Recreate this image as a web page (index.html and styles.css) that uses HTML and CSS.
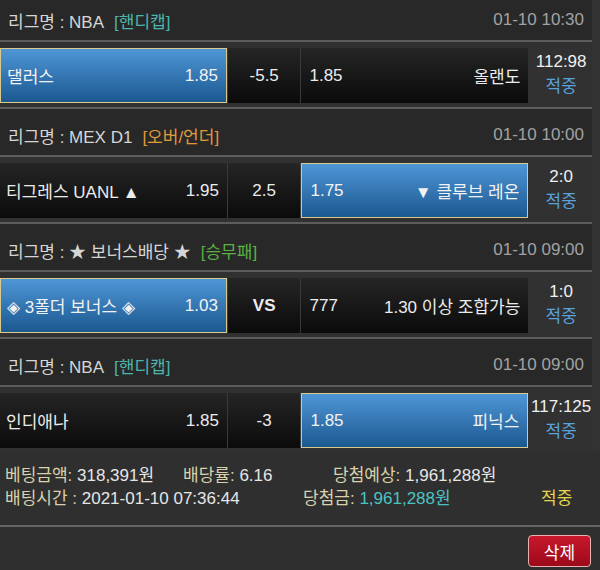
FILE: index.html
```html
<!DOCTYPE html>
<html>
<head>
    <title>Bet Slip</title>
    <link rel="stylesheet" href="styles.css">
  </head>

  <body>
    <div class="board">

      <div class="game">
        <div class="league">
          <span class="league-name">리그명 : NBA</span>
          <span class="market handi">[핸디캡]</span>
          <span class="time">01-10 10:30</span>
        </div>
        <div class="row">
          <div class="cell team pick"><span>댈러스</span><span>1.85</span></div>
          <div class="cell line">-5.5</div>
          <div class="cell team"><span>1.85</span><span>올랜도</span></div>
          <div class="result"><div class="score">112:98</div><div class="hit">적중</div></div>
        </div>
      </div>

      <div class="game">
        <div class="league">
          <span class="league-name">리그명 : MEX D1</span>
          <span class="market overunder">[오버/언더]</span>
          <span class="time">01-10 10:00</span>
        </div>
        <div class="row">
          <div class="cell team"><span>티그레스 UANL ▲</span><span>1.95</span></div>
          <div class="cell line">2.5</div>
          <div class="cell team pick"><span>1.75</span><span>▼ 클루브 레온</span></div>
          <div class="result"><div class="score">2:0</div><div class="hit">적중</div></div>
        </div>
      </div>

      <div class="game">
        <div class="league">
          <span class="league-name">리그명 : ★ 보너스배당 ★</span>
          <span class="market winlose">[승무패]</span>
          <span class="time">01-10 09:00</span>
        </div>
        <div class="row">
          <div class="cell team pick"><span>◈ 3폴더 보너스 ◈</span><span>1.03</span></div>
          <div class="cell line vs">VS</div>
          <div class="cell team"><span>777</span><span>1.30 이상 조합가능</span></div>
          <div class="result"><div class="score">1:0</div><div class="hit">적중</div></div>
        </div>
      </div>

      <div class="game last">
        <div class="league">
          <span class="league-name">리그명 : NBA</span>
          <span class="market handi">[핸디캡]</span>
          <span class="time">01-10 09:00</span>
        </div>
        <div class="row">
          <div class="cell team"><span>인디애나</span><span>1.85</span></div>
          <div class="cell line">-3</div>
          <div class="cell team pick"><span>1.85</span><span>피닉스</span></div>
          <div class="result"><div class="score">117:125</div><div class="hit">적중</div></div>
        </div>
      </div>

    </div>

    <div class="summary">
      <div class="summary-row">
        <span class="amount"><b>베팅금액:</b> 318,391원</span>
        <span class="rate"><b>배당률:</b> 6.16</span>
        <span class="expect"><b>당첨예상:</b> 1,961,288원</span>
      </div>
      <div class="summary-row">
        <span class="bet-time"><b>배팅시간 :</b> 2021-01-10 07:36:44</span>
        <span class="won"><b>당첨금:</b> <em>1,961,288원</em></span>
        <span class="status">적중</span>
      </div>
    </div>

    <div class="actions">
      <button class="delete-button">삭제</button>
    </div>
  </body>
</html>
```

FILE: styles.css
```css
 body {
   background-color: #323232;
   font-family: "Liberation Sans", Arial, "Noto Sans CJK KR", sans-serif;
   font-size: 17px;
   color: #e6e6e6;
   margin: 0;
   padding: 0;
 }

 .board {
   width: 592px;
 }

 .league {
   display: flex;
   align-items: center;
   height: 48px;
   padding: 6px 8px 0 8px;
   box-sizing: border-box;
   background-color: #282828;
   border-bottom: 2px solid #5c5c5c;
 }

 .game:first-child .league {
   height: 42px;
   padding-top: 0;
 }

 .league-name {
   color: #d6d6d6;
 }

 .market {
   margin-left: 10px;
 }

 .handi { color: #4db5ad; }
 .overunder { color: #e09a3c; }
 .winlose { color: #5cb043; }

 .time {
   margin-left: auto;
   color: #a2a2a2;
 }

 .row {
   display: flex;
   height: 67px;
   padding: 6px 0 4px 0;
   box-sizing: border-box;
   background-color: #313131;
   border-bottom: 2px solid #5c5c5c;
 }

 .game.last .row {
   border-bottom: none;
   height: 65px;
 }

 .cell {
   height: 55px;
   display: flex;
   align-items: center;
   box-sizing: border-box;
   background: linear-gradient(#252525, #0b0b0b);
   color: #ececec;
 }

 .team {
   width: 228px;
   justify-content: space-between;
   padding: 0 8px 0 6px;
 }

 .team + .line {
   border-left: 1px solid #3a3a3a;
   border-right: 1px solid #3a3a3a;
 }

 .line {
   width: 75px;
   justify-content: center;
 }

 .vs {
   font-weight: bold;
 }

 .pick {
   background: linear-gradient(#4f96d6, #1b5890);
   border: 1px solid #d9ca8c;
   color: #f2f2f2;
 }

 .line + .pick,
 .line + .team {
   padding: 0 8px;
 }

 .result {
   width: 62px;
   margin-left: 2px;
   text-align: center;
   line-height: 25px;
   padding-top: 1px;
 }

 .score {
   color: #f0f0f0;
   white-space: nowrap;
 }

 .hit {
   color: #5aa2dc;
 }

 .summary {
   background-color: #2f2f2f;
   padding: 12px 0 15px 5px;
   border-bottom: 2px solid #666;
   line-height: 23px;
 }

 .summary-row {
   display: flex;
 }

 .summary b {
   font-weight: normal;
   color: #d9d2aa;
 }

 .amount { width: 178px; }
 .rate { width: 150px; }
 .bet-time { width: 298px; }
 .won { width: 238px; }

 .won em {
   font-style: normal;
   color: #4cc3c3;
 }

 .status {
   color: #e3d54d;
 }

 .actions {
   display: flex;
   justify-content: flex-end;
   padding: 8px 9px 0 0;
   background-color: #2f2f2f;
   height: 44px;
   box-sizing: border-box;
 }

 .delete-button {
   width: 63px;
   height: 32px;
   background: linear-gradient(#c8182c, #9c0a1a);
   border: 1px solid #e8b0b0;
   border-radius: 4px;
   color: white;
   font-family: "Noto Sans CJK KR", sans-serif;
   font-size: 17px;
   padding: 0;
 }
```
